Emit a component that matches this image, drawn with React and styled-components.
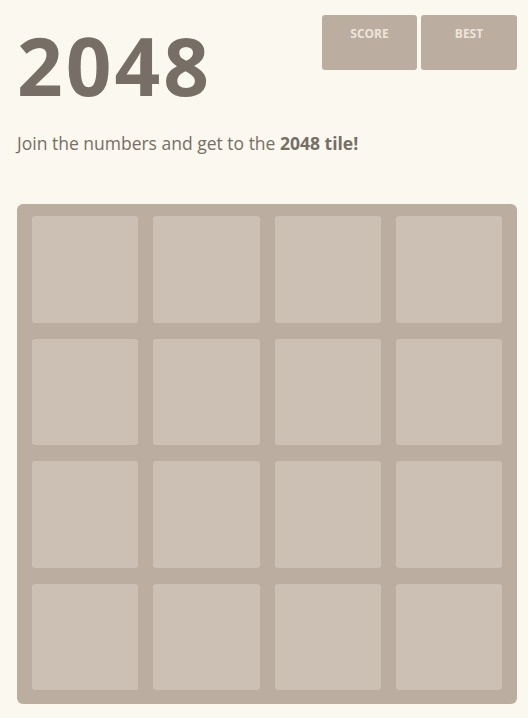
import React from "react";
import styled, { createGlobalStyle } from "styled-components";

const GlobalStyle = createGlobalStyle`
  html, body {
    margin: 0;
    padding: 0;
    background: #faf8ef;
    font-family: "Open Sans", "Liberation Sans", sans-serif;
    color: #776e65;
  }
`;

const Page = styled.div`
  width: 528px;
  height: 718px;
  padding: 15px 11px 0 17px;
  box-sizing: border-box;
`;

const Header = styled.div`
  display: flex;
  justify-content: space-between;
  align-items: flex-start;
`;

const Title = styled.h1`
  margin: 10px 0 0 0;
  font-size: 80px;
  line-height: 1;
  font-weight: 700;
  letter-spacing: 3px;
`;

const Scores = styled.div`
  display: flex;
  gap: 4px;
`;

const ScoreBox = styled.div`
  width: ${(p) => p.$width}px;
  height: 55px;
  box-sizing: border-box;
  padding-top: 10px;
  background: #bbada0;
  border-radius: 3px;
  text-align: center;
  color: #eee4da;
  font-size: 12px;
  font-weight: 700;
  text-transform: uppercase;
`;

const Intro = styled.p`
  margin: 27px 0 0 0;
  font-size: 17.5px;
  line-height: 22px;

  strong {
    font-weight: 700;
  }
`;

const Board = styled.div`
  margin-top: 50px;
  width: 500px;
  height: 500px;
  box-sizing: border-box;
  padding: 12px 15px 14px;
  background: #bbada0;
  border-radius: 6px;
  display: grid;
  grid-template-columns: repeat(4, 1fr);
  grid-template-rows: repeat(4, 1fr);
  column-gap: 15px;
  row-gap: 16px;
`;

const Cell = styled.div`
  background: rgba(238, 228, 218, 0.35);
  border-radius: 3px;
`;

export default function App() {
  return (
    <>
      <GlobalStyle />
      <Page>
        <Header>
          <Title>2048</Title>
          <Scores>
            <ScoreBox $width={95}>Score</ScoreBox>
            <ScoreBox $width={96}>Best</ScoreBox>
          </Scores>
        </Header>
        <Intro>
          Join the numbers and get to the <strong>2048 tile!</strong>
        </Intro>
        <Board>
          {Array.from({ length: 16 }).map((_, i) => (
            <Cell key={i} />
          ))}
        </Board>
      </Page>
    </>
  );
}
